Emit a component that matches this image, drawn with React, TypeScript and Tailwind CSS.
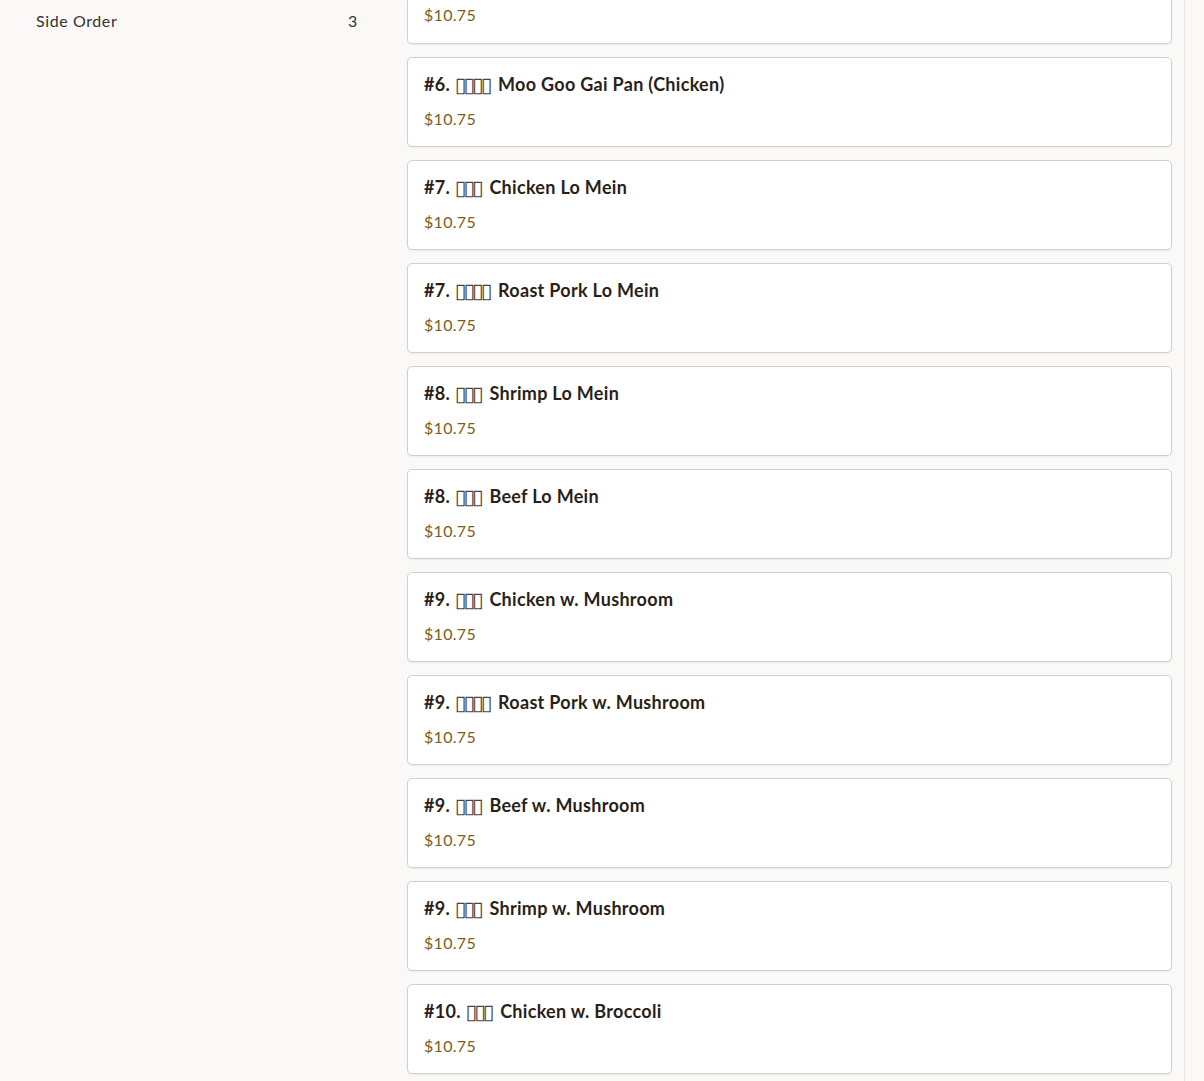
const items = [
  { name: '#6. ▯▯▯▯ Moo Goo Gai Pan (Chicken)', price: '$10.75' },
  { name: '#7. ▯▯▯ Chicken Lo Mein', price: '$10.75' },
  { name: '#7. ▯▯▯▯ Roast Pork Lo Mein', price: '$10.75' },
  { name: '#8. ▯▯▯ Shrimp Lo Mein', price: '$10.75' },
  { name: '#8. ▯▯▯ Beef Lo Mein', price: '$10.75' },
  { name: '#9. ▯▯▯ Chicken w. Mushroom', price: '$10.75' },
  { name: '#9. ▯▯▯▯ Roast Pork w. Mushroom', price: '$10.75' },
  { name: '#9. ▯▯▯ Beef w. Mushroom', price: '$10.75' },
  { name: '#9. ▯▯▯ Shrimp w. Mushroom', price: '$10.75' },
  { name: '#10. ▯▯▯ Chicken w. Broccoli', price: '$10.75' },
]

// the "▯" runs stand in for the missing-glyph boxes of the Chinese names
function Title({ text }: { text: string }) {
  const parts = text.split(/(▯+)/)
  return (
    <h3 className="text-[18px] font-bold leading-[24px] tracking-[0.3px] text-[#2a1f19]">
      {parts.map((p, i) =>
        p.startsWith('▯') ? (
          <span
            key={i}
            className="font-['DejaVu_Sans',sans-serif] font-normal text-[21px] leading-[0px] tracking-[-2.9px] text-[#4a4343] align-[-1px] mr-[4px]"
          >
            {p}
          </span>
        ) : (
          <span key={i}>{p}</span>
        )
      )}
    </h3>
  )
}

function Price({ value }: { value: string }) {
  return <p className="text-[16px] leading-[20px] tracking-[0.3px] text-[#7d5d1a]">{value}</p>
}

function ItemCard({ name, price }: { name: string; price: string }) {
  return (
    <div className="h-[90px] bg-white border border-[#d3d0cc] rounded-[5px] shadow-[0_1px_2px_rgba(0,0,0,0.06)] px-4 pt-[14px]">
      <Title text={name} />
      <div className="mt-[13px]">
        <Price value={price} />
      </div>
    </div>
  )
}

export default function App() {
  return (
    <div className="h-[1081px] overflow-hidden bg-[#faf9f7] flex font-['Lato',sans-serif]">
      <aside className="w-[384px] shrink-0 pl-9 pr-[26px] pt-[11px]">
        <div className="flex justify-between text-[16px] leading-[20px] tracking-[0.6px] text-[#333]">
          <span>Side Order</span>
          <span>3</span>
        </div>
      </aside>
      <main className="flex-1 pl-[23px] pr-3">
        <div className="flex flex-col gap-[13px]">
          {/* previous card, scrolled mostly out of view */}
          <div className="h-[44px] bg-white border border-t-0 border-[#d3d0cc] rounded-b-[5px] shadow-[0_1px_2px_rgba(0,0,0,0.06)] px-4 pt-[5px]">
            <Price value="$10.75" />
          </div>
          {items.map((it, i) => (
            <ItemCard key={i} name={it.name} price={it.price} />
          ))}
        </div>
      </main>
      <div className="w-5 shrink-0 border-l border-[#e8e6e3] bg-[#faf9f7]" />
    </div>
  )
}
